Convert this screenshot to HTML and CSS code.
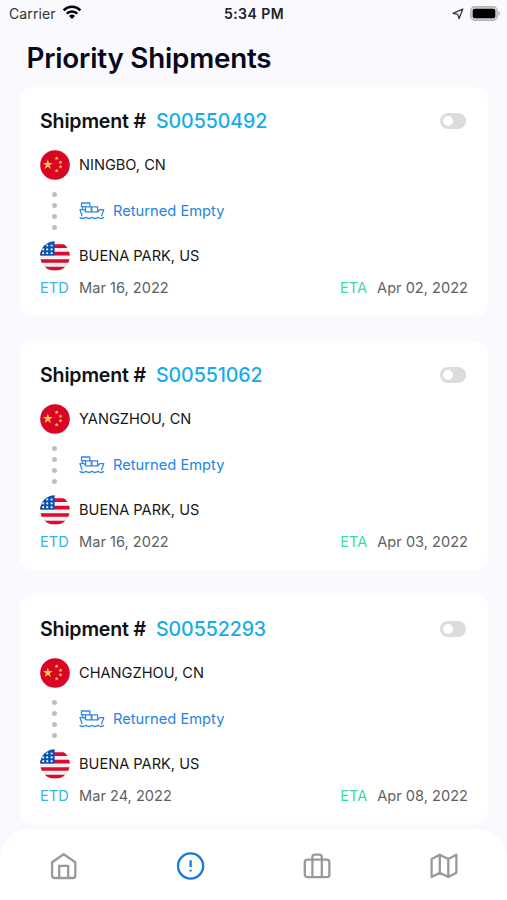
FILE: index.html
```html
<!DOCTYPE html>
<html lang="en">
<head>
    <meta charset="UTF-8">
    <meta name="viewport" content="width=device-width, initial-scale=1.0">
    <title>Priority Shipments</title>
    <link rel="stylesheet" href="styles.css">
</head>
<body>
    <svg class="sprite" xmlns="http://www.w3.org/2000/svg">
        <symbol id="flag-cn" viewBox="0 0 30 30">
            <circle cx="15" cy="15" r="14.8" fill="#d80524"/>
            <g fill="#fbc845">
                <path d="M7.8 9.6l1.2 3.5h3.7l-3 2.2 1.2 3.6-3.1-2.2-3.1 2.2 1.2-3.6-3-2.2h3.7z"/>
                <path id="small-star" d="M16.7 6.3l.6 1.3 1.4.1-1.1 1 .4 1.4-1.3-.8-1.3.8.4-1.4-1.1-1 1.4-.1z"/>
                <use href="#small-star" x="3.8" y="4"/>
                <use href="#small-star" x="3.8" y="8.4"/>
                <use href="#small-star" x="0" y="12.4"/>
            </g>
        </symbol>
        <symbol id="flag-us" viewBox="0 0 30 30">
            <clipPath id="round"><circle cx="15" cy="15" r="14.8"/></clipPath>
            <g clip-path="url(#round)">
                <rect width="30" height="30" fill="#f3f0f4"/>
                <path d="M0 5.2h30M0 12.6h30M0 20h30M0 27.6h30" stroke="#d80c30" stroke-width="3.7"/>
                <rect width="14.6" height="14.4" fill="#0b52ac"/>
                <g fill="#e6effa">
                    <circle cx="7.2" cy="4.5" r="1.1"/><circle cx="11.6" cy="4.5" r="1.1"/>
                    <circle cx="3.2" cy="8.4" r="1.1"/><circle cx="7.2" cy="8.4" r="1.1"/><circle cx="11.6" cy="8.4" r="1.1"/>
                    <circle cx="3.2" cy="12.2" r="1.1"/><circle cx="7.2" cy="12.2" r="1.1"/><circle cx="11.6" cy="12.2" r="1.1"/>
                </g>
            </g>
        </symbol>
        <symbol id="ship" viewBox="0 0 26 18">
            <g fill="none" stroke="#3388e2" stroke-width="1.3" stroke-linejoin="round" stroke-linecap="round">
                <path d="M3 13.8L1 7.6h4.2l1.8 2.2h12l1.8-2.2h4L22.6 13.8"/>
                <path d="M3.5 7.4V4.6H2.5V1h8.3v3.6M3.5 4.6h3M6.5 9.3V4.8h5.8v4.8M12.8 9.6V4.8h5.8v4.8"/>
                <path d="M1 15.6c2 1.3 4 1.3 6-.3 2 1.6 4 1.6 6 0 2 1.6 4 1.6 6 0 1.7 1.5 3.7 1.6 5.5.3"/>
            </g>
        </symbol>
    </svg>

    <div class="status-bar">
        <div class="carrier">
            <span>Carrier</span>
            <svg width="20" height="15" viewBox="0 0 20 15">
                <g fill="none" stroke="#050508" stroke-width="2.5">
                    <path d="M1.6 5.3a12 12 0 0 1 16.8 0"/>
                    <path d="M4.7 8.7a7.6 7.6 0 0 1 10.6 0"/>
                </g>
                <path d="M7 10.9a4.3 4.3 0 0 1 6 0L10 14z" fill="#050508"/>
            </svg>
        </div>
        <div class="time">5:34 PM</div>
        <div class="indicators">
            <svg width="12" height="12" viewBox="0 0 12 12">
                <path d="M10.8 1.1L1 5.3l4.8 1 1.2 4.4z" fill="none" stroke="#38383b" stroke-width="1.3" stroke-linejoin="round"/>
            </svg>
            <svg width="31" height="15" viewBox="0 0 31 15">
                <rect x=".8" y=".8" width="26.4" height="13.4" rx="4" fill="#d5d5d8" stroke="#b5b5b8" stroke-width="1.4"/>
                <rect x="2.7" y="2.7" width="22.6" height="9.6" rx="2" fill="#000"/>
                <path d="M28.5 5c2 1 2 4 0 5z" fill="#aaaaac"/>
            </svg>
        </div>
    </div>

    <h1>Priority Shipments</h1>

    <main class="shipments">
        <article class="card">
            <div class="card-head">
                <h2>Shipment #</h2>
                <span class="number">S00550492</span>
                <span class="toggle"></span>
            </div>
            <div class="place"><svg class="flag"><use href="#flag-cn"/></svg><span>NINGBO, CN</span></div>
            <div class="leg">
                <div class="dots"><i></i><i></i><i></i><i></i></div>
                <svg class="ship"><use href="#ship"/></svg>
                <span>Returned Empty</span>
            </div>
            <div class="place"><svg class="flag"><use href="#flag-us"/></svg><span>BUENA PARK, US</span></div>
            <div class="dates">
                <span class="etd">ETD</span><span>Mar 16, 2022</span>
                <span class="eta">ETA</span><span>Apr 02, 2022</span>
            </div>
        </article>

        <article class="card">
            <div class="card-head">
                <h2>Shipment #</h2>
                <span class="number">S00551062</span>
                <span class="toggle"></span>
            </div>
            <div class="place"><svg class="flag"><use href="#flag-cn"/></svg><span>YANGZHOU, CN</span></div>
            <div class="leg">
                <div class="dots"><i></i><i></i><i></i><i></i></div>
                <svg class="ship"><use href="#ship"/></svg>
                <span>Returned Empty</span>
            </div>
            <div class="place"><svg class="flag"><use href="#flag-us"/></svg><span>BUENA PARK, US</span></div>
            <div class="dates">
                <span class="etd">ETD</span><span>Mar 16, 2022</span>
                <span class="eta">ETA</span><span>Apr 03, 2022</span>
            </div>
        </article>

        <article class="card">
            <div class="card-head">
                <h2>Shipment #</h2>
                <span class="number">S00552293</span>
                <span class="toggle"></span>
            </div>
            <div class="place"><svg class="flag"><use href="#flag-cn"/></svg><span>CHANGZHOU, CN</span></div>
            <div class="leg">
                <div class="dots"><i></i><i></i><i></i><i></i></div>
                <svg class="ship"><use href="#ship"/></svg>
                <span>Returned Empty</span>
            </div>
            <div class="place"><svg class="flag"><use href="#flag-us"/></svg><span>BUENA PARK, US</span></div>
            <div class="dates">
                <span class="etd">ETD</span><span>Mar 24, 2022</span>
                <span class="eta">ETA</span><span>Apr 08, 2022</span>
            </div>
        </article>
    </main>

    <nav class="tab-bar">
        <a class="tab">
            <svg viewBox="0 0 30 30"><path d="M4.1 11.3L15.7 3.2l11.6 8.1v13.2a2.5 2.5 0 0 1-2.5 2.5H6.6a2.5 2.5 0 0 1-2.5-2.5zM11.2 27V14.8h9V27"/></svg>
        </a>
        <a class="tab active">
            <svg viewBox="0 0 30 30"><circle cx="15.6" cy="15" r="12.6"/><path d="M15.6 9.3v6.6M15.6 18.8v1.8"/></svg>
        </a>
        <a class="tab">
            <svg viewBox="0 0 30 30"><rect x="2.8" y="8.6" width="24.6" height="17.6" rx="2.7"/><path d="M10.4 26.2V6.2a2.5 2.5 0 0 1 2.5-2.5h4.4a2.5 2.5 0 0 1 2.5 2.5v20"/></svg>
        </a>
        <a class="tab">
            <svg viewBox="0 0 30 30"><path d="M2.6 8l8.2-4.3L19.3 8l8.1-4.3v18L19.3 26l-8.5-4.3L2.6 26zM10.8 3.7v18M19.3 8v18"/></svg>
        </a>
    </nav>
</body>
</html>
```
FILE: styles.css
```css
* { box-sizing: border-box; }
body { margin: 0; width: 507px; height: 900px; display: flex; flex-direction: column; overflow: hidden; font-family: Inter, "Liberation Sans", sans-serif; background: #f9f9fe; color: #17171a; }
.sprite { position: absolute; width: 0; height: 0; }
.status-bar { display: grid; grid-template-columns: 1fr auto 1fr; align-items: center; height: 28px; padding: 0 6px 0 9px; font-size: 14px; }
.carrier { display: flex; align-items: center; gap: 6px; color: #333336; letter-spacing: 0.1px; }
.carrier span { margin-top: -1px; }
.carrier svg { margin-top: -3px; }
.time { margin: -1px 2px 0 0; font-weight: 600; letter-spacing: 0.45px; color: #222225; }
.indicators { display: flex; align-items: center; justify-content: flex-end; gap: 6px; }
.indicators svg { margin-top: -1px; }
h1 { margin: 0; padding-left: 26.5px; height: 59px; line-height: 61px; font-size: 27.8px; font-weight: 600; letter-spacing: -0.22px; color: #08081c; }
.shipments { display: flex; flex-direction: column; gap: 25px; height: 742px; padding: 0 19px 0 20px; }
.card { flex: none; height: 229px; padding: 20px; border-radius: 12px; background: #fff; }
.card-head { display: flex; align-items: center; height: 28px; margin-bottom: 15px; font-size: 19.6px; }
h2 { width: 116px; margin: 0; font-size: 19.6px; font-weight: 600; letter-spacing: -0.18px; white-space: nowrap; color: #111114; }
.number { font-weight: 550; letter-spacing: -0.1px; color: #16ace8; }
.toggle { width: 26px; height: 16px; margin: 0 2px 0 auto; padding: 3px; border-radius: 8px; background: #dcdcdc; }
.toggle::before { content: ""; display: block; width: 10px; height: 10px; border-radius: 50%; background: #fff; }
.place { display: flex; align-items: center; gap: 9px; height: 30px; font-size: 14.6px; }
.place span { margin-top: -1px; }
.flag { width: 30px; height: 30px; }
.leg { display: flex; align-items: center; height: 61px; font-size: 14.7px; color: #2683e6; }
.dots { display: flex; flex-direction: column; align-items: center; gap: 6px; width: 29px; }
.dots i { width: 5px; height: 5px; border-radius: 50%; background: #bfbfbf; }
.ship { width: 26px; height: 18px; margin: 0 8.5px 0 9.5px; }
.dates { display: flex; align-items: center; height: 24px; margin-top: 5px; font-size: 14.6px; color: #606063; }
.etd { width: 39px; color: #36b4ea; }
.eta { margin: 0 10px 0 auto; color: #35dda0; }
.tab-bar { display: grid; grid-template-columns: repeat(4, 1fr); align-items: center; flex: 1; padding-top: 2px; border-radius: 28px 28px 0 0; background: #fff; box-shadow: 0 -1px 5px rgba(245, 245, 252, 0.9); }
.tab { display: flex; justify-content: center; }
.tab svg { width: 30px; height: 30px; fill: none; stroke: #999; stroke-width: 2.3; stroke-linejoin: round; }
.tab.active svg { stroke: #1579dc; }
```
